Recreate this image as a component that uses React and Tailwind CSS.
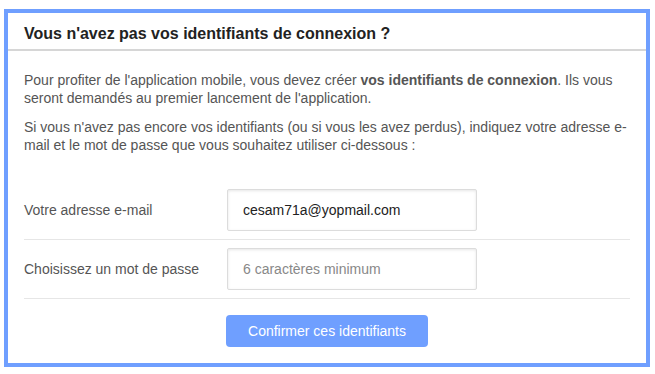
export default function App() {
  const font = { fontFamily: '"Liberation Sans", Arial, sans-serif' };
  return (
    <div className="w-[655px] h-[374px] bg-white pt-[9px] pl-[4px]" style={font}>
      <div className="w-[646px] h-[358px] border-4 border-[#6f9fff] bg-white flex flex-col">
        <div className="h-[38px] border-b-2 border-[#d6d6d6] px-4 flex items-center">
          <h1 className="text-[16px] font-bold text-[#222] leading-none pt-[5px]">
            Vous n'avez pas vos identifiants de connexion ?
          </h1>
        </div>
        <div className="px-4 pt-[20px] text-[14px] leading-[18px] text-[#555]">
          <p className="mb-[11px]">
            Pour profiter de l'application mobile, vous devez créer{" "}
            <b className="font-bold">vos identifiants de connexion</b>. Ils vous seront demandés au premier lancement de l'application.
          </p>
          <p>
            Si vous n'avez pas encore vos identifiants (ou si vous les avez perdus), indiquez votre adresse e-mail et le mot de passe que vous souhaitez utiliser ci-dessous :
          </p>
          <div className="mt-[27px]">
            <div className="flex items-center py-2 border-b border-[#e6e6e6]">
              <label className="w-[203px] text-[14px] text-[#555]">Votre adresse e-mail</label>
              <input
                className="w-[250px] h-[42px] border border-[#dcdcdc] rounded-[2px] px-[15px] text-[14px] text-[#222] shadow-[inset_0_1px_3px_rgba(0,0,0,0.1)] outline-none"
                defaultValue="cesam71a@yopmail.com"
                style={font}
              />
            </div>
            <div className="flex items-center py-2 border-b border-[#e6e6e6]">
              <label className="w-[203px] text-[14px] text-[#555]">Choisissez un mot de passe</label>
              <input
                className="w-[250px] h-[42px] border border-[#dcdcdc] rounded-[2px] px-[15px] text-[14px] text-[#222] placeholder:text-[#888] shadow-[inset_0_1px_3px_rgba(0,0,0,0.1)] outline-none"
                placeholder="6 caractères minimum"
                type="password"
                style={font}
              />
            </div>
            <div className="pt-4 pl-[202px]">
              <button className="w-[202px] h-[32px] rounded-[4px] bg-[#6f9fff] text-white text-[14px]" style={font}>
                Confirmer ces identifiants
              </button>
            </div>
          </div>
        </div>
      </div>
    </div>
  );
}
